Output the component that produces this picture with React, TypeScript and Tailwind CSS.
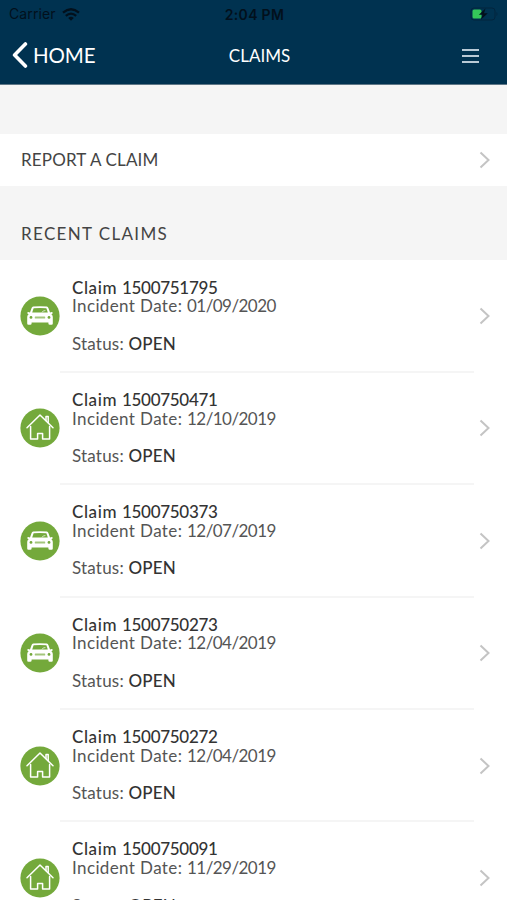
import React from "react";

interface Claim {
  id: string;
  date: string;
  status: string;
  type: "auto" | "home";
}

const claims: Claim[] = [
  { id: "1500751795", date: "01/09/2020", status: "OPEN", type: "auto" },
  { id: "1500750471", date: "12/10/2019", status: "OPEN", type: "home" },
  { id: "1500750373", date: "12/07/2019", status: "OPEN", type: "auto" },
  { id: "1500750273", date: "12/04/2019", status: "OPEN", type: "auto" },
  { id: "1500750272", date: "12/04/2019", status: "OPEN", type: "home" },
  { id: "1500750091", date: "11/29/2019", status: "OPEN", type: "home" },
];

function CarIcon() {
  return (
    <svg viewBox="0 0 40 40" className="block size-10">
      <circle cx="20" cy="20" r="19.6" fill="#74a93b" />
      <path
        d="M11.6 11.9Q12 10.8 13.2 10.6Q20 9.8 26.8 10.6Q28 10.8 28.4 11.9L30 16.6L31.8 16Q33.2 16.2 32.6 17.4L31.4 18.2Q32.8 19.4 32.8 21V27.4Q32.8 28.8 31.6 28.8H29.8Q28.4 28.8 28.4 27.4V26.4H11.6V27.4Q11.6 28.8 10.2 28.8H8.4Q7.2 28.8 7.2 27.4V21Q7.2 19.4 8.6 18.2L7.4 17.4Q6.8 16.2 8.2 16L10 16.6Z"
        fill="#fff"
      />
      <path d="M13.6 12.3Q20 11.5 26.4 12.3L27.8 16.4H12.2Z" fill="#74a93b" />
      <path d="M22 16.4Q22.8 14.4 25.4 14.6" fill="none" stroke="#fff" strokeWidth="0.7" />
      <circle cx="11" cy="21.4" r="1.4" fill="#74a93b" />
      <circle cx="29" cy="21.4" r="1.4" fill="#74a93b" />
      <rect x="14.8" y="20.4" width="10.4" height="2.2" rx="0.6" fill="#a3c67c" />
    </svg>
  );
}

function HouseIcon() {
  return (
    <svg viewBox="0 0 40 40" className="block size-10">
      <circle cx="20" cy="20" r="19.6" fill="#74a93b" />
      <g fill="none" stroke="#fff" strokeWidth="1.5" strokeLinecap="round" strokeLinejoin="round">
        <path d="M7 19.8L20 7L33 19.8" />
        <path d="M26 12.6V8.6H28.2V14.6" />
        <path d="M10.6 18.6V31H17.6V25.4H22.6V31H29.6V18.6" />
      </g>
    </svg>
  );
}

function Chevron() {
  return (
    <svg viewBox="0 0 12 18" className="block h-[18px] w-3 shrink-0">
      <path d="M1.5 1.5L9.5 9L1.5 16.5" fill="none" stroke="#c4c4c4" strokeWidth="2" />
    </svg>
  );
}

function StatusBar() {
  return (
    <div className="grid h-7 grid-cols-3 items-center pl-[9px] pr-[7px] font-['Inter',sans-serif] leading-none text-[#02101c]">
      <div className="flex items-center gap-1.5">
        <span className="text-[14px] tracking-[0.1px]">Carrier</span>
        <svg viewBox="0 0 18 13" className="block h-[13px] w-[18px]">
          <g fill="none" stroke="#02101c" strokeWidth="2.3">
            <path d="M1 4.6Q9 -2.2 17 4.6" />
            <path d="M3.8 7.8Q9 3.4 14.2 7.8" />
          </g>
          <path d="M6.2 10Q9 7.6 11.8 10L9 12.8Z" fill="#02101c" />
        </svg>
      </div>
      <span className="pt-px text-center text-[14px] font-semibold tracking-[0.3px]">2:04 PM</span>
      <svg viewBox="0 0 30 14" className="block h-3.5 w-[30px] justify-self-end">
        <rect x="1" y="1" width="24" height="12" rx="3" fill="none" stroke="#02243d" strokeWidth="1" />
        <rect x="2.5" y="2.5" width="9" height="9" rx="1.5" fill="#35c759" />
        <path d="M15.5 1.5L8.8 7.8H12.6L11 12.5L17.8 6.2H14Z" fill="#02101c" />
        <path d="M26.5 5Q28.4 7 26.5 9Z" fill="#02243d" />
      </svg>
    </div>
  );
}

function Header() {
  return (
    <header className="h-[85px] shrink-0 border-b border-[#5f7787] bg-[#003250]">
      <StatusBar />
      <div className="grid h-[54px] grid-cols-[204px_86px_1fr] items-center pl-3 pr-[28px] text-white">
        <div className="flex items-center gap-[5px]">
          <svg viewBox="0 0 16 26" className="block h-[26px] w-4">
            <path d="M13.4 2L2.6 13L13.4 24" fill="none" stroke="#fff" strokeWidth="3.6" strokeLinecap="round" strokeLinejoin="round" />
          </svg>
          <span className="text-[20.5px] leading-none tracking-[-0.1px]">HOME</span>
        </div>
        <h1 className="pl-px text-center text-[17px] leading-none">CLAIMS</h1>
        <div className="flex flex-col gap-1 justify-self-end pt-0.5">
          <div className="h-0.5 w-[17px] bg-[#b9cad6]" />
          <div className="h-0.5 w-[17px] bg-[#b9cad6]" />
          <div className="h-0.5 w-[17px] bg-[#b9cad6]" />
        </div>
      </div>
    </header>
  );
}

function ClaimRow({ id, date, status, type }: Claim) {
  return (
    <li className="flex h-[112.4px] shrink-0">
      <div className="w-[60px] pl-5 pt-[35.5px]">
        {type === "auto" ? <CarIcon /> : <HouseIcon />}
      </div>
      <div className="w-[414px] border-b-2 border-[#f5f5f5] pl-3 pt-[18px] text-[17px] leading-[18.7px] text-[#555]">
        <p className="font-medium text-[#333]">
          <span className="tracking-[0.6px]">Claim </span>
          <span className="tracking-[-0.3px]">{id}</span>
        </p>
        <p>
          <span className="tracking-[0.38px]">Incident Date: </span>
          <span className="tracking-[-0.55px]">{date}</span>
        </p>
        <p className="pt-[18.7px]">
          <span className="tracking-[0.2px]">Status: </span>
          <span className="font-medium tracking-[0.2px] text-[#333]">{status}</span>
        </p>
      </div>
      <div className="pl-[5px] pt-[46.5px]">
        <Chevron />
      </div>
    </li>
  );
}

export default function App() {
  return (
    <div className="flex h-[900px] w-[507px] flex-col overflow-hidden bg-white font-['Lato',sans-serif]">
      <Header />
      <div className="h-[49px] shrink-0 bg-[#f5f5f5]" />
      <div className="flex h-[52px] shrink-0 items-center justify-between pl-[21px] pr-4">
        <span className="text-[17px] tracking-[0.15px] text-[#444]">REPORT A CLAIM</span>
        <Chevron />
      </div>
      <div className="flex h-[74px] shrink-0 items-center bg-[#f5f5f5] pl-[21px] pt-[21px]">
        <h2 className="text-[17px] tracking-[1.35px] text-[#444]">RECENT CLAIMS</h2>
      </div>
      <ul className="pt-[0.5px]">
        {claims.map((claim) => (
          <ClaimRow key={claim.id} {...claim} />
        ))}
      </ul>
    </div>
  );
}
